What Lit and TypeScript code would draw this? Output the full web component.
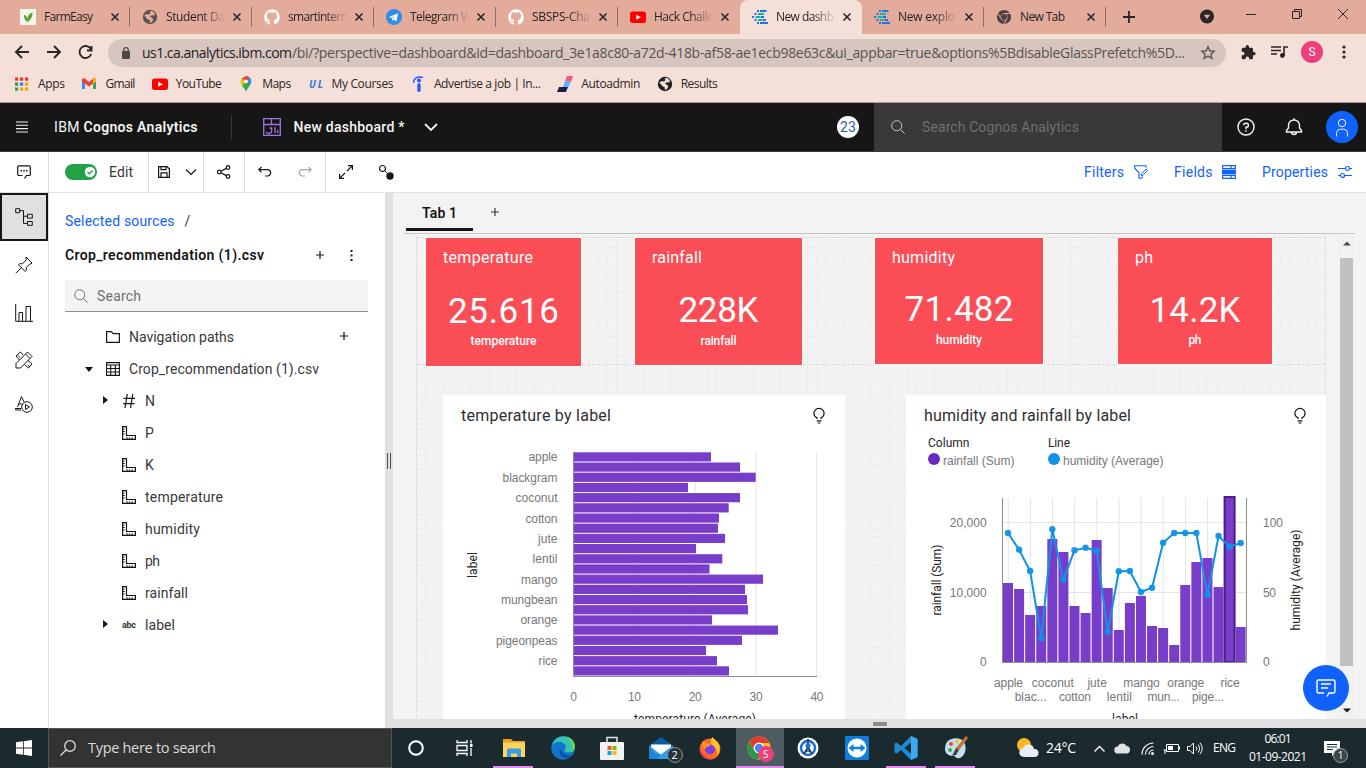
import { LitElement, html, css, svg, nothing } from "lit";
import { customElement, property } from "lit/decorators.js";

/* Inline label that spreads its letters to a given advance width. */
@customElement("fit-text")
class FitText extends LitElement {
  static styles = css`
    :host { display: inline-block; white-space: pre; flex: none; width: max-content; }
  `;
  @property({ type: Number }) w = 0;
  firstUpdated() {
    const len = (this.textContent || "").length;
    if (!this.w || len < 2) return;
    const ls = (this.w - this.getBoundingClientRect().width) / (len - 1);
    this.style.letterSpacing = `${ls}px`;
    this.style.marginRight = `${-ls}px`;
  }
  render() { return html`<slot></slot>`; }
}

const fit = (text: string, w: number, cls = "") => html`<fit-text class=${cls} w=${w}>${text}</fit-text>`;

const icon = (w: number, h: number, body: unknown, cls = "") =>
  html`<svg class="i ${cls}" width=${w} height=${h} viewBox="0 0 ${w} ${h}">${body}</svg>`;

const iconCss = css`
  .i { display: block; flex: none; fill: none; stroke: currentColor; stroke-width: 1; overflow: visible; }
  .f { fill: currentColor; stroke: none; }
  .n { stroke: none; }
`;

const globe = (c: string, bg: string) => icon(16, 16, svg`
  <circle cx="8" cy="8" r="7.2" fill=${c} stroke="none"/>
  <path fill=${bg} stroke="none" d="M2.2 6.5L5 5l2 .6L8.5 4 7.6 2.4 10 1.8l2.8 2.4-.3 2.3-2.8-.3L8 7.6l2 1.2 1.4 1.6-1.6 2.9-2 .8.1-2.6-2.7-1.4L3.8 8z"/>`);
const github = icon(16, 16, svg`<path class="n" fill="#fff" d="M8 .2a8 8 0 00-2.6 15.5c.4.1.6-.2.6-.5v-1.900c-2.300.5-2.800-.9-2.800-.9-.4-.9-.9-1.200-.9-1.200-.7-.5.1-.5.1-.5.800.1 1.300.9 1.300.9.700 1.200 1.900.9 2.300.7.1-.5.300-.9.5-1.100-1.800-.2-3.600-.9-3.600-4 0-.9.300-1.600.800-2.100-.1-.2-.4-1 .1-2.100 0 0 .7-.2 2.200.8a7.700 7.700 0 014 0c1.500-1 2.200-.8 2.200-.8.4 1.100.2 1.900.1 2.100.5.600.800 1.300.800 2.100 0 3.100-1.900 3.800-3.700 4 .300.300.6.8.6 1.600v2.300c0 .3.100.600.6.5A8 8 0 008 .2z"/>`);
const youtube = icon(16, 16, svg`<rect class="n" x="0" y="2.500" width="16" height="11.500" rx="2.500" fill="#f00"/><path class="n" fill="#fff" d="M6.300 5.700l4.500 2.500-4.500 2.500z"/>`);
const cognos = icon(16, 16, svg`<g class="n" fill="#2d6fe0">
  <rect x="8" y="1" width="6.500" height="2"/><rect x="5" y="1" width="2" height="2"/><rect x="2.500" y="4" width="2" height="2"/>
  <rect x="0" y="7" width="2" height="2"/><rect x="2.500" y="10" width="2" height="2"/><rect x="5" y="13" width="2" height="2"/><rect x="8" y="13" width="8" height="2"/><rect x="9" y="7" width="3" height="2"/></g>
  <g class="n" fill="#12b5a6"><rect x="6" y="4" width="6" height="2"/><rect x="3.500" y="7" width="5" height="2"/><rect x="6" y="10" width="4.500" height="2"/></g>
  <rect class="n" x="11" y="10" width="3" height="2" fill="#2d6fe0"/>`);
const telegram = icon(16, 16, svg`<circle class="n" cx="8" cy="8" r="8" fill="#2f8fe8"/><path class="n" fill="#fff" d="M3 8l9-3.800-1.600 8.200-2.700-2-1.400 1.400-.4-2.400L10.500 6 5.200 9z"/>`);
const chromeGrey = icon(16, 16, svg`<circle cx="8" cy="8" r="5.300" stroke="#4a4040" stroke-width="3.600"/><circle class="n" cx="8" cy="8" r="3" fill="#4a4040"/><path stroke="#e3ab9a" d="M8 4.500h7M5 9.500L1.500 4M11 9.800L7.500 15.500"/>`);
const leaf = icon(16, 16, svg`<rect class="n" width="16" height="16" fill="#f4f6ee"/><path class="n" fill="#5ba52c" d="M4 6c2 0 3 2 3.300 4C7.500 7 9 4.500 12.500 3.500c0 5-2 7-4.500 9.500C5 12 3.800 9 4 6z"/>`);

@customElement("browser-bar")
class BrowserBar extends LitElement {
  static styles = [iconCss, css`
    :host { display: block; height: 103px; font: 12px/16px "Open Sans", "Noto Sans", sans-serif; color: #2a2526; }
    .strip { height: 34px; background: #e3ab9a; display: flex; padding-left: 8px; }
    .tab { width: 122px; box-sizing: border-box; padding: 0 9px 0 12px; display: flex; align-items: center; flex: none; }
    .sep { width: 1px; height: 20px; background: #8f6f68; margin: 0 -9px 0 auto; flex: none; }
    .name { margin-left: 8px; width: 60px; overflow: hidden; flex: none; }
    .fade { -webkit-mask-image: linear-gradient(90deg, #000 60%, transparent 100%); mask-image: linear-gradient(90deg, #000 60%, transparent 100%); }
    .close { margin-left: 7px; }
    .on { background: #f5e0d9; border-radius: 8px 8px 0 0; }
    .x { stroke-width: 1.6; }
    .new { margin: 11px 0 0 17px; stroke-width: 1.8; }
    .caption { margin-left: auto; display: flex; }
    .drop { margin: 9px 14px 0 0; }
    .cap { margin: 8px 18px 0; }
    .cap.last { margin-right: 18px; }
    .nav { height: 36px; background: #f5e0d9; display: flex; align-items: center; }
    .back { margin-left: 13px; } .fwd { margin-left: 14px; } .rel { margin-left: 15px; }
    .thick { stroke-width: 1.9; }
    .url { margin: 2px 0 0 15px; width: 1118px; height: 28px; box-sizing: border-box; border-radius: 14px; background: #d7c6bf; display: flex; align-items: center; padding: 0 10px 0 13px; font-size: 14px; line-height: 20px; color: #5a5251; }
    .host { color: #26211f; margin-left: 11px; }
    .star { margin-left: auto; color: #5f5656; stroke-width: 1.4; }
    .ext { margin-left: 15px; } .list { margin-left: 15px; }
    .me { margin-left: 13px; width: 22px; height: 22px; border-radius: 50%; background: #ee3f7b; color: #fff; text-align: center; font: 12px/22px Roboto, sans-serif; }
    .kebab { margin-left: 19px; }
    .marks { background: #f5e0d9; border-bottom: 1px solid #a99b98; display: flex; gap: 16.4px; align-items: center; padding: 0 0 4px 14px; box-sizing: border-box; height: 33px; }
    .mark { display: flex; gap: 8px; align-items: center; }
    .ul { font: italic bold 10px/16px "Open Sans", sans-serif; }
  `];

  private tab(ic: unknown, name: string, w: number, faded: boolean, on: boolean, sep: boolean) {
    return html`<div class="tab ${on ? "on" : ""}">${ic}
      <div class="name ${faded ? "fade" : ""}">${fit(name, w)}</div>
      <div class="close">${icon(8, 8, svg`<path d="M.5.5l7 7M7.500.5l-7 7"/>`, "x")}</div>
      ${sep ? html`<span class="sep"></span>` : nothing}</div>`;
  }

  render() {
    const dots = ["#e33", "#e33", "#e33", "#2c9f4b", "#2b7de9", "#f2a600", "#2c9f4b", "#f2a600", "#f2a600"];
    const marks: [unknown, string, number][] = [
      [icon(16, 16, svg`${dots.map((c, k) => svg`<rect class="n" fill=${c} x=${1 + (k % 3) * 5} y=${1.5 + Math.floor(k / 3) * 5} width="3.200" height="3.200"/>`)}`), "Apps", 27],
      [icon(16, 16, svg`<path class="n" fill="#4285f4" d="M1 13V4.500L4 7v6z"/><path class="n" fill="#34a853" d="M12 13V7l3-2.500V13z"/><path class="n" fill="#ea4335" d="M1 5.500V3.500C1 2 2.800 1.800 3.800 2.600L8 6l4.200-3.400C13.200 1.800 15 2 15 3.500v2L8 10.500z"/><path class="n" fill="#fbbc04" d="M12 3v4.700l3-2.200v-2C15 2 13 2 12 3z"/>`), "Gmail", 30],
      [youtube, "YouTube", 46],
      [icon(16, 16, svg`<path class="n" fill="#34a853" d="M8 16C7.500 13 3 10 3 5.500h10C13 10 8.500 13 8 16z"/><path class="n" fill="#4285f4" d="M8 0a5.300 5.300 0 015.300 5.300c0 1.200-.3 2-.8 3L8 5z"/><path class="n" fill="#ea4335" d="M8 0L3.500 2.500 8 5.500l3.500-4A5 5 0 008 0z"/><path class="n" fill="#fbbc04" d="M8 5.500L4.500 9.800C3.500 8.500 2.700 7 2.700 5.300c0-1.100.3-2 .8-2.800z"/><circle class="n" cx="8" cy="5.300" r="1.900" fill="#fff"/>`), "Maps", 29],
      [icon(16, 16, svg`<text class="n ul" x="1" y="11.500" fill="#2a7ad4" textLength="14">UL</text>`), "My Courses", 62],
      [icon(16, 16, svg`<circle class="n" cx="9" cy="4.500" r="2" fill="#2557f5"/><rect class="n" x="7.400" y="7.300" width="3.200" height="8.700" rx="1.400" fill="#2557f5"/><path stroke="#2557f5" stroke-width="1.300" d="M3.500 7c0-5 4-7 9.500-5.500"/>`), "Advertise a job | In...", 107],
      [icon(16, 16, svg`<path class="n" fill="#f2557f" d="M10 0h6l-2 5.500H8z"/><path class="n" fill="#54b5f7" d="M8 5.500h6L11.500 11H6z"/><path class="n" fill="#1b1f4b" d="M2 11h9l-2 5H0z"/>`), "Autoadmin", 59],
      [globe("#242122", "#f5e0d9"), "Results", 37],
    ];
    return html`
      <div class="strip">
        ${this.tab(leaf, "FarmEasy", 49, false, false, true)}
        ${this.tab(globe("#5c5050", "#e3ab9a"), "Student Da", 59, true, false, true)}
        ${this.tab(github, "smartintern", 60, true, false, true)}
        ${this.tab(telegram, "Telegram W", 62, true, false, true)}
        ${this.tab(github, "SBSPS-Cha", 58, true, false, true)}
        ${this.tab(youtube, "Hack Challe", 60, true, false, false)}
        ${this.tab(cognos, "New dashb", 58, true, true, false)}
        ${this.tab(cognos, "New explo", 57, true, false, true)}
        ${this.tab(chromeGrey, "New Tab", 45, false, false, true)}
        ${icon(12, 12, svg`<path d="M6 0v12M0 6h12"/>`, "new")}
        <div class="caption">
          ${icon(14, 14, svg`<circle class="f" cx="7" cy="7.500" r="7"/><path class="n" fill="#e3ab9a" d="M3.800 5.800h6.400L7 10z"/>`, "drop")}
          ${icon(10, 11, svg`<path d="M0 6.500h10"/>`, "cap")}
          ${icon(10, 11, svg`<path d="M.5 3.500h7v7h-7zM2.500 3V1.500h7v7H8"/>`, "cap")}
          ${icon(10, 11, svg`<path d="M0 1l10 10M10 1L0 11"/>`, "cap last")}
        </div>
      </div>
      <div class="nav">
        ${icon(18, 16, svg`<path d="M16 8H3M9 2L3 8l6 6"/>`, "thick back")}
        ${icon(18, 16, svg`<path d="M2 8h13M9 2l6 6-6 6"/>`, "thick fwd")}
        ${icon(15, 16, svg`<path d="M13 5.500A6 6 0 1013.200 10M13.500 2v4.500H9"/>`, "thick rel")}
        <div class="url">
          ${icon(10, 14, svg`<rect class="n" x="1" y="5" width="8" height="8" rx="1" fill="#4d4746"/><path stroke="#4d4746" stroke-width="1.400" d="M2.800 6V3.800a2.200 2.200 0 014.400 0V6"/>`)}
          ${fit("us1.ca.analytics.ibm.com", 150, "host")}${fit("/bi/?perspective=dashboard&id=dashboard_3e1a8c80-a72d-418b-af58-ae1ecb98e63c&ui_appbar=true&options%5BdisableGlassPrefetch%5D...", 893)}
          ${icon(16, 16, svg`<path d="M8 1.800l1.800 4 4.400.4-3.300 2.900 1 4.300L8 11.100l-3.900 2.300 1-4.300L1.800 6.200l4.400-.4z"/>`, "star")}
        </div>
        ${icon(15, 15, svg`<path class="f" d="M13 7h-1V4a1.300 1.300 0 00-1.300-1.300H8V1.700a1.700 1.700 0 00-3.400 0v1H2A1.300 1.300 0 00.7 4v2.700h1a1.800 1.800 0 010 3.600h-1V13A1.300 1.300 0 002 14.300h2.600v-1a1.800 1.800 0 013.600 0v1h2.500A1.300 1.300 0 0012 13v-2.700h1A1.650 1.650 0 0013 7z"/>`, "ext")}
        ${icon(17, 14, svg`<path stroke-width="1.600" d="M0 2h10M0 5.500h10M0 9h6M13 10.500V2h4"/><circle class="f" cx="11.400" cy="10.500" r="2.400"/>`, "list")}
        <div class="me">S</div>
        ${icon(4, 14, svg`<g class="f"><circle cx="2" cy="2" r="1.600"/><circle cx="2" cy="7" r="1.600"/><circle cx="2" cy="12" r="1.600"/></g>`, "kebab")}
      </div>
      <div class="marks">${marks.map(([ic, t, w]) => html`<div class="mark">${ic}${fit(t, w)}</div>`)}</div>`;
  }
}

const magnifier = (s: number, cls = "") => icon(s, s, svg`<circle cx=${s * 0.41} cy=${s * 0.41} r=${s * 0.36}/><path d="M${s * 0.67} ${s * 0.67}L${s - 0.3} ${s - 0.3}"/>`, cls);
const plus8 = (cls = "") => icon(8, 8, svg`<path stroke-width="1.200" d="M4 0v8M0 4h8"/>`, cls);

@customElement("cognos-header")
class CognosHeader extends LitElement {
  static styles = [iconCss, css`
    :host { display: block; font: 14px/20px Roboto, "Noto Sans", sans-serif; }
    .top { height: 48px; background: #161616; border-bottom: 1px solid #393939; color: #f4f4f4; display: flex; align-items: center; }
    .menu { margin-left: 16px; }
    .ibm { margin-left: 26px; } .cog { margin-left: 4px; font-weight: 600; }
    .rule { width: 1px; height: 24px; background: #393939; margin-left: 33px; }
    .dash { margin-left: 31px; color: #a374e0; }
    .doc { margin-left: 13px; font-weight: 500; }
    .chev { margin-left: 19px; stroke-width: 1.800; }
    .count { margin-left: auto; width: 22px; height: 22px; border-radius: 50%; background: #fff; color: #2a5db0; display: flex; justify-content: center; align-items: center; }
    .search { margin-left: 15px; width: 348px; height: 48px; background: #393939; display: flex; align-items: center; color: #6f6f6f; box-sizing: border-box; padding-left: 17px; gap: 17px; }
    .light { color: #c6c6c6; }
    .help { margin-left: 15px; stroke-width: 1.400; } .bell { margin-left: 30px; stroke-width: 1.400; }
    .user { margin: 0 8px 0 23px; width: 32px; height: 32px; border-radius: 50%; background: #0f62fe; display: flex; align-items: center; justify-content: center; stroke-width: 1.500; }
    .bar { height: 40px; background: #fff; border-bottom: 1px solid #e0e0e0; color: #161616; display: flex; }
    .cell { display: flex; align-items: center; border-right: 1px solid #dcdcdc; box-sizing: border-box; }
    .c1 { width: 49px; padding-left: 17px; } .c2 { width: 100px; padding-left: 16px; gap: 12px; color: #393939; }
    .c3 { width: 55px; padding-left: 9px; gap: 16px; } .c4 { width: 41px; padding-left: 13px; }
    .c5 { width: 81px; padding-left: 13px; gap: 26px; } .c6 { padding-left: 13px; gap: 26px; border: 0; }
    .dim { color: #a8a8a8; }
    .right { margin-left: auto; display: flex; align-items: center; color: #0f62fe; padding-right: 14px; }
    .pad { margin-left: 26px; } .g { margin-left: 10px; }
    .g1 { margin-left: 9.5px; }
  `];
  render() {
    return html`
      <div class="top">
        ${icon(12, 12, svg`<path stroke-width="1.100" d="M0 1h12M0 4.300h12M0 7.600h12M0 11h12"/>`, "menu")}
        ${fit("IBM", 25.5, "ibm")}${fit("Cognos Analytics", 114, "cog")}
        <div class="rule"></div>
        ${icon(18, 18, svg`<path stroke-width="1.300" d="M.7.700h16.600v16.600H.7zM.7 6.500h16.600M8.500.7v5.800M6.500 10h2.200v2.500a3 3 0 01-5.500 1.700M12 9v6M14.800 12v3"/>`, "dash")}
        ${fit("New dashboard *", 111, "doc")}
        ${icon(14, 8, svg`<path d="M1 1l6 6 6-6"/>`, "chev")}
        <div class="count">${fit("23", 16)}</div>
        <div class="search">${magnifier(14, "light")}${fit("Search Cognos Analytics", 157)}</div>
        ${icon(18, 18, svg`<circle cx="9" cy="9" r="8"/><path d="M6.700 7.300a2 2 0 012-2h.7a2 2 0 010 4H9v2M9 12.300v1.500"/>`, "help")}
        ${icon(18, 18, svg`<path d="M1.500 14v-1.500L3.500 10V7.500a5.500 5.500 0 0111 0V10l2 2.500V14zM6.500 14a2.500 2.500 0 005 0M9 .3V2"/>`, "bell")}
        <div class="user">${icon(14, 19, svg`<circle cx="7" cy="5" r="3.700"/><path d="M1.500 18.500v-3.300a4 4 0 014-4h3a4 4 0 014 4v3.300"/>`)}</div>
      </div>
      <div class="bar">
        <div class="cell c1">${icon(14, 14, svg`<path stroke-width="1.200" d="M5.500 10.500H2A1.300 1.300 0 01.7 9.200V2.200A1.300 1.300 0 012 .9h10a1.300 1.300 0 011.300 1.300v7a1.300 1.300 0 01-1.300 1.300H9.500L7.500 13.500"/><path class="f" d="M3.500 5h1.500v1.500H3.500zM6.250 5h1.500v1.500h-1.500zM9 5h1.500v1.500H9z"/>`)}</div>
        <div class="cell c2">${icon(32, 16, svg`<rect class="n" width="32" height="16" rx="8" fill="#24a148"/><circle class="n" cx="25" cy="8" r="5.200" fill="#fff"/><path stroke="#24a148" stroke-width="1.400" d="M22.500 8l1.800 1.800 3.300-3.300"/>`)}${fit("Edit", 24)}</div>
        <div class="cell c3">
          ${icon(12, 12, svg`<path stroke-width="1.200" d="M.6.600h8.400l2.400 2.400v8.400H.6zM3 .6v3h5v-3M3 11.400V6.800h6v4.600"/>`)}
          ${icon(10, 6, svg`<path stroke-width="1.200" d="M0 .5l5 5 5-5"/>`)}</div>
        <div class="cell c4">${icon(14, 14, svg`<g stroke-width="1.200"><circle cx="2.300" cy="7" r="1.800"/><circle cx="11" cy="2.500" r="1.800"/><circle cx="11" cy="11.500" r="1.800"/><path d="M4 6.200l5.300-2.800M4 7.800l5.300 2.800"/></g>`)}</div>
        <div class="cell c5">
          ${icon(14, 10, svg`<path stroke-width="1.200" d="M3.500 0L.8 2.700l2.700 2.700M1 2.700h9a3.200 3.200 0 010 6.300H7"/>`)}
          ${icon(14, 10, svg`<path stroke-width="1.200" d="M10.500 0l2.700 2.700-2.700 2.700M13 2.700H4a3.200 3.200 0 000 6.300h3"/>`, "dim")}</div>
        <div class="cell c6">
          ${icon(14, 14, svg`<path stroke-width="1.200" d="M9 .6h4.400V5M13.400.6L8 6M.6 9v4.400H5M.6 13.400L6 8"/>`)}
          ${icon(15, 14, svg`<circle cx="3.500" cy="3.500" r="3" stroke-width="1.200"/><path d="M5.700 5.700L8 8"/><circle class="f" cx="11" cy="11" r="3.700"/>`)}</div>
        <div class="right">
          ${fit("Filters", 40)}
          ${icon(14, 14, svg`<path stroke-width="1.100" d="M12 2.800V.8H.7v2.400L5 7.800v5.400h2.500l1.500-1.500"/><path stroke-width="1" d="M7.300 10.700l.4-2 4.300-4.600 1.500 1.400-4.300 4.600z"/>`, "g")}
          ${fit("Fields", 38.5, "pad")}
          ${icon(14, 14, svg`<path stroke-width="1.200" d="M.6.600h12.800v3H.6zM.6 10.400h12.800v3H.6zM9 .6v3M9 10.400v3"/><rect class="f" y="4.800" width="14" height="4.400"/>`, "g1")}
          ${fit("Properties", 66, "pad")}
          ${icon(14, 14, svg`<path stroke-width="1.200" d="M0 3.500h7.500M11.500 3.500H14M0 10.500h2.500M6.500 10.500H14"/><circle cx="9.500" cy="3.500" r="2" stroke-width="1.200"/><circle cx="4.500" cy="10.500" r="2" stroke-width="1.200"/>`, "g")}
        </div>
      </div>`;
  }
}

@customElement("source-panel")
class SourcePanel extends LitElement {
  static styles = [iconCss, css`
    :host { display: flex; flex: none; width: 393px; background: #fff; color: #393939; font: 14px/20px Roboto, "Noto Sans", sans-serif; }
    .rail { width: 48px; border-right: 1px solid #e0e0e0; flex: none; }
    .slot { height: 48px; display: flex; align-items: center; justify-content: center; box-sizing: border-box; color: #161616; stroke-width: 1.300; }
    .slot.s3 { height: 45px; } .slot.s4 { height: 44px; }
    .active { background: #e0e0e0; border: 2px solid #161616; }
    .body { width: 336px; padding: 18px 17px 0 16px; box-sizing: border-box; }
    .crumb { display: flex; color: #0f62fe; gap: 10px; } .slash { color: #393939; }
    .head { display: flex; align-items: center; margin-top: 14px; font-weight: 600; color: #161616; }
    .p1 { margin-left: 52px; } .k { margin-left: 26px; }
    .find { margin: 15px 0 9px; height: 31px; background: #f4f4f4; border-bottom: 1px solid #8d8d8d; display: flex; align-items: center; padding-left: 9px; gap: 9px; color: #6f6f6f; }
    .row { height: 32px; display: flex; align-items: center; padding-left: 20px; }
    .row.child { padding-left: 36px; }
    .caret { width: 21px; flex: none; color: #161616; }
    .child .caret { padding-left: 2px; width: 19px; margin-top: -2px; }
    .row svg { color: #161616; }
    .name { margin-left: 9px; }
    .p2 { margin: -2px 0 0 106px; }
    .split { width: 8px; background: #e0e0e0; display: flex; align-items: flex-start; padding: 260px 0 0; box-sizing: border-box; }
    .abc { font: bold 9px/10px Roboto, sans-serif; width: 14px; }
  `];
  render() {
    const right = icon(5, 8, svg`<path class="f" d="M0 0l5 4-5 4z"/>`);
    const down = icon(8, 5, svg`<path class="f" d="M0 0h8L4 5z"/>`);
    const ruler = icon(14, 14, svg`<path stroke-width="1.200" d="M.6.600h3.900v8.900h8.900v3.900H.6zM.6 3h2M.6 5.500h2M.6 8h2M5 13.400v-2M7.500 13.400v-2M10 13.400v-2"/>`);
    const hash = icon(14, 14, svg`<path stroke-width="1.200" d="M5.300 0L3 14M10.800 0L8.500 14M1.500 4.300H13M1 9.700h11.500"/>`);
    const children: [unknown, unknown, string, number][] = [
      [right, hash, "N", 0], ["", ruler, "P", 0], ["", ruler, "K", 0], ["", ruler, "temperature", 78],
      ["", ruler, "humidity", 55], ["", ruler, "ph", 15], ["", ruler, "rainfall", 43],
      [right, html`<span class="abc">${fit("abc", 14)}</span>`, "label", 30],
    ];
    return html`
      <div class="rail">
        <div class="slot active">${icon(18, 18, svg`<path d="M.7.700h4v4h-4zM12.500 6.300h4.800v3.800h-4.800zM12.500 13.500h4.800v3.800h-4.800zM4.700 2.700h3.800v12.700h4M8.500 8.200h4"/>`)}</div>
        <div class="slot">${icon(18, 18, svg`<path d="M11 1l6 6-1 1-1-.2-3.800 3.800.1 2.800-1.100 1.100-6.700-6.700 1.100-1.100 2.800.1L11.200 4 11 2zM6.500 11.500L.7 17.300"/>`)}</div>
        <div class="slot">${icon(18, 18, svg`<path d="M.7 0v17.300H18M4 17.300V8.500h3.500v8.800M11 17.300V2.500h4.500v14.800"/>`)}</div>
        <div class="slot s3">${icon(18, 18, svg`<path d="M12.500 1L17 5.500 5.500 17H1v-4.500zM10.500 3l4.500 4.500M5.500 1L1 5l3.500 4M8 4L5.500 1M13 9.500l4 3.500-3.500 4-4-3.500M3 4.500l2 2M13 14.500l1.500 1"/>`)}</div>
        <div class="slot s4">${icon(18, 18, svg`<path d="M2.500 12L6.500 1.500 9 7M3.800 9H7M0 13.500h6M0 15h6"/><circle cx="12" cy="12" r="5.300"/><path d="M10.500 9.500v5l4-2.500z"/>`)}</div>
      </div>
      <div class="body">
        <div class="crumb">${fit("Selected sources", 109.5)}<span class="slash">/</span></div>
        <div class="head">${fit("Crop_recommendation (1).csv", 199)}${plus8("p1")}${icon(3, 12, svg`<path class="f" d="M.5 1h2v2h-2zM.5 5.500h2v2h-2zM.5 10h2v2h-2z"/>`, "k")}</div>
        <div class="find">${magnifier(14)}${fit("Search", 44)}</div>
        <div class="row"><span class="caret"></span>${icon(14, 12, svg`<path stroke-width="1.200" d="M.6.600h4.700l2 2h6.100v8.800H.6z"/>`)}${fit("Navigation paths", 105, "name")}${plus8("p2")}</div>
        <div class="row"><span class="caret">${down}</span>${icon(14, 14, svg`<path stroke-width="1.100" d="M.6.600h12.800v12.800H.6zM.6 3h12.800M.6 6.500h12.800M.6 10h12.800M4.700 3v10.400M9.300 3v10.400"/>`)}${fit("Crop_recommendation (1).csv", 190, "name")}</div>
        ${children.map(([c, ic, t, w]) => html`<div class="row child"><span class="caret">${c}</span>${ic}${fit(t, w, "name")}</div>`)}
      </div>
      <div class="split">${icon(8, 16, svg`<path stroke="#525252" d="M2.500 0v16M5.500 0v16"/>`)}</div>`;
  }
}

const arial = "lib";
const label = (t: string, x: number, y: number, w: number, anchor = "middle", cls = arial) =>
  svg`<text class=${cls} x=${x} y=${y} text-anchor=${anchor} textLength=${w}>${t}</text>`;
const vertical = (t: string, x: number, y: number, w: number) =>
  svg`<text class="ttl" transform="translate(${x} ${y}) rotate(-90)" text-anchor="middle" textLength=${w}>${t}</text>`;

const crops: [string, number, string][] = [
  ["apple", 29, "apple"], ["blackgram", 55, "blac..."], ["coconut", 42, "coconut"], ["cotton", 32, "cotton"],
  ["jute", 19.5, "jute"], ["lentil", 25, "lentil"], ["mango", 36.5, "mango"], ["mungbean", 56.5, "mun..."],
  ["orange", 37, "orange"], ["pigeonpeas", 61.5, "pige..."], ["rice", 19, "rice"],
];
const tempEnds = [711, 740, 755.7, 688, 740, 728.7, 719, 718, 725, 696, 722.3, 709.5, 763, 745, 747, 748, 712, 778, 742, 706, 717, 729];
const rainTops = [583, 589, 615, 606, 539, 552, 606, 613, 540, 588, 630, 603, 596, 626, 628, 645, 585, 562, 558, 587, 497, 627];
const humid = [533, 549.7, 571, 638.3, 529.3, 579.7, 550.3, 547.7, 550.7, 631.7, 571.3, 571, 592, 587.7, 542.7, 533, 533, 533, 594.7, 536, 546.7, 543];

@customElement("dash-canvas")
class DashCanvas extends LitElement {
  static styles = [iconCss, css`
    :host { display: flex; flex-direction: column; flex: 1; min-width: 0; background: #f3f3f3; color: #161616; font: 14px/20px Roboto, "Noto Sans", sans-serif; }
    .tabs { height: 40px; margin: 0 11px; border-bottom: 1px solid #c6c6c6; display: flex; padding-left: 2px; box-sizing: content-box; }
    .tab { width: 67px; height: 35px; border-bottom: 3px solid #161616; display: flex; align-items: center; justify-content: center; font-weight: 600; line-height: 40px; box-sizing: content-box; }
    .tab fit-text { margin-top: 5px; }
    .add { margin: 15px 0 0 18px; color: #393939; }
    .view { height: 485px; padding: 3px 0 0 23px; box-sizing: border-box; display: flex; overflow: hidden; }
    .board { height: 490px; border: 1px dashed #dcdcdc; box-sizing: border-box; width: 910px; flex: none;
      background-image: linear-gradient(90deg, #ececec 1px, transparent 1px), linear-gradient(#ececec 1px, transparent 1px); background-size: 9.1px 9.1px; background-position: -1px -1px; }
    .kpis { display: flex; align-items: flex-start; height: 127px; border-bottom: 1px dashed #dcdcdc; box-sizing: border-box; }
    .kpi { background: #fb4d56; color: #fff; border: 1px solid #fff; box-sizing: border-box; margin-top: -1px; display: flex; flex-direction: column; align-items: center; flex: none; }
    .k0 { width: 157px; height: 130px; margin-left: 8px; } .k1 { width: 169px; height: 129px; margin-left: 52px; }
    .k2 { width: 170px; height: 128px; margin-left: 71px; } .k3 { width: 156px; height: 128px; margin-left: 73px; }
    .kt { align-self: flex-start; margin: 9px 0 0 17px; font-size: 16px; line-height: 22px; }
    .kv { font-size: 35px; line-height: 40px; margin-top: 23px; }
    .k1 .kv { margin-top: 22px; } .k2 .kv { margin-top: 21px; } .k3 .kv { margin-top: 22px; }
    .kc { font-size: 12px; line-height: 16px; margin-top: 1px; font-weight: 500; }
    .k1 .kc { margin-top: 2px; } .k2 .kc { margin-top: 2px; }
    .charts { display: flex; padding-top: 30px; height: 325px; }
    .card { background: #fff; height: 325px; display: flex; flex-direction: column; flex: none; }
    .a { width: 402px; margin-left: 26px; } .b { width: 420px; margin-left: 61px; }
    .ch { height: 42px; display: flex; align-items: center; justify-content: space-between; padding: 0 20px 0 18px; font-size: 16px; flex: none; }
    .ch fit-text { color: #303030; }
    .plot { display: block; flex: none; }
    .lib { font: 12px "Liberation Sans", Arial, sans-serif; fill: #777; }
    .ttl { font: 12px Roboto, sans-serif; fill: #262626; }
    .grid { stroke: #e4e4e4; stroke-width: 1; } .axis { stroke: #8d8d8d; fill: none; }
    .bar { fill: #6929c4; fill-opacity: .9; }
    .hi { fill: #6929c4; fill-opacity: .9; stroke: #491d8b; stroke-width: 2; }
    .line { fill: none; stroke: #1192e8; stroke-width: 2; } .dot { fill: #1192e8; fill-opacity: .95; }
    .scroll { margin: -1px 0 0 12px; width: 17px; background: #f1f1f1; display: flex; flex-direction: column; align-items: center; flex: none; }
    .up { margin-top: 5px; color: #505050; } .thumb { width: 13px; height: 408px; background: #c1c1c1; margin: 12px 0 42px; flex: none; }
    .foot { height: 9px; background: #e0e0e0; display: flex; align-items: center; justify-content: center; }
    .grip { width: 14px; height: 4px; background: #8d8d8d; }
  `];

  private kpi(n: number, t: string, tw: number, v: string, vw: number, cw: number) {
    return html`<div class="kpi k${n}">${fit(t, tw, "kt")}${fit(v, vw, "kv")}${fit(t, cw, "kc")}</div>`;
  }
  private bulb() {
    return icon(12, 16, svg`<path stroke-width="1.200" d="M4 11V9.800C2 8.800.9 7.300.9 5.500a5.100 5.100 0 0110.200 0c0 1.800-1.100 3.300-3.100 4.300V11M3.700 12.800h4.600M4.500 15h3"/>`);
  }

  render() {
    const cx = (i: number) => 1008 + i * 11.08;
    return html`
      <div class="tabs"><div class="tab">${fit("Tab 1", 35)}</div>${plus8("add")}</div>
      <div class="view">
        <div class="board">
          <div class="kpis">
            ${this.kpi(0, "temperature", 90, "25.616", 111, 66)}
            ${this.kpi(1, "rainfall", 50, "228K", 80, 36)}
            ${this.kpi(2, "humidity", 63, "71.482", 109, 46)}
            ${this.kpi(3, "ph", 18, "14.2K", 91, 13)}
          </div>
          <div class="charts">
            <div class="card a">
              <div class="ch">${fit("temperature by label", 150)}${this.bulb()}</div>
              <svg class="plot" width="402" height="283" viewBox="443 437 402 283">
                ${[1, 2, 3, 4].map((i) => svg`<path class="grid" d="M${573.5 + i * 60.8} 452v224"/>`)}
                ${tempEnds.map((e, i) => svg`<rect class="bar" x="574" y=${452.3 + i * 10.19} width=${e - 574} height="9.200"/>`)}
                <path class="axis" d="M573.500 452v224.500h243.500"/>
                ${crops.map(([t, w], i) => label(t, 557.5, 461.4 + i * 20.38, w, "end"))}
                ${[0, 10, 20, 30, 40].map((v, i) => label(String(v), 573.7 + i * 60.8, 701, v ? 13 : 6.5))}
                ${label("temperature (Average)", 695, 722.8, 122, "middle", "ttl")}
                ${vertical("label", 477, 565, 26)}
              </svg>
            </div>
            <div class="card b">
              <div class="ch">${fit("humidity and rainfall by label", 207)}${this.bulb()}</div>
              <svg class="plot" width="420" height="283" viewBox="906 437 420 283">
                ${label("Column", 928, 447, 41.5, "start", "ttl")}${label("Line", 1048, 447, 22, "start", "ttl")}
                <circle cx="934" cy="459" r="6" fill="#6929c4"/><circle cx="1054" cy="459" r="6" fill="#1192e8"/>
                ${label("rainfall (Sum)", 943, 465, 71.5, "start")}${label("humidity (Average)", 1063, 465, 100.5, "start")}
                <path class="grid" d="M1003 522.500h244M1003 592.500h244"/>
                ${crops.map((_, i) => svg`<path class="grid" d="M${1008.2 + i * 22.16} 498v164"/>`)}
                ${rainTops.map((y, i) => i === 20
                  ? svg`<rect class="hi" x=${cx(i) - 5} y=${y} width="10" height=${662 - y}/>`
                  : svg`<rect class="bar" x=${cx(i) - 5} y=${y} width="10" height=${662 - y}/>`)}
                <path class="axis" d="M1002.500 498v164.500h244v-164.500"/>
                <polyline class="line" points=${humid.map((y, i) => `${cx(i)},${y}`).join(" ")}/>
                ${humid.map((y, i) => svg`<circle class="dot" cx=${cx(i)} cy=${y} r="3.200"/>`)}
                ${label("20,000", 986.7, 527, 37, "end")}${label("10,000", 986.7, 597, 37, "end")}${label("0", 986.7, 666, 6.5, "end")}
                ${label("100", 1263, 527, 20, "start")}${label("50", 1263, 597, 13, "start")}${label("0", 1263, 666, 6.5, "start")}
                ${crops.map(([, w, s], i) => label(s, cx(i * 2) + 0.5, i % 2 ? 701 : 687, s.endsWith("...") ? 32 : w))}
                ${label("label", 1125, 722.8, 26, "middle", "ttl")}
                ${vertical("rainfall (Sum)", 941, 580, 71)}${vertical("humidity (Average)", 1300, 580, 101)}
              </svg>
            </div>
          </div>
        </div>
        <div class="scroll">
          ${icon(8, 5, svg`<path class="f" d="M0 4.500h8L4 .5z"/>`, "up")}
          <div class="thumb"></div>
          ${icon(8, 5, svg`<path class="f" d="M0 .5h8l-4 4z"/>`)}
        </div>
      </div>
      <div class="foot"><div class="grip"></div></div>`;
  }
}

const chromeLogo = svg`<circle class="n" cx="12" cy="12" r="11.500" fill="#fbc116"/><path class="n" fill="#e33b2e" d="M2 6.200A11.500 11.500 0 0122 6.200L22.300 7H12l-5.500 6z"/><path class="n" fill="#229a4a" d="M2 6.200A11.500 11.500 0 0011 23.400L15.500 15 7 14z"/><circle class="n" cx="12" cy="12" r="5.400" fill="#fff"/><circle class="n" cx="12" cy="12" r="4.200" fill="#4285f4"/>`;

@customElement("task-bar")
class TaskBar extends LitElement {
  static styles = [iconCss, css`
    :host { display: flex; height: 40px; background: #1a2a2f; color: #fff; font: 12px/16px "Open Sans", "Noto Sans", sans-serif; }
    .start { width: 48px; display: flex; align-items: center; justify-content: center; }
    .find { width: 344px; box-sizing: border-box; border: 1px solid #565656; background: #333; display: flex; align-items: center; gap: 12px; padding-left: 11px; font-size: 14.5px; line-height: 20px; color: #dcdcdc; }
    .find svg { stroke-width: 1.300; }
    .apps { display: flex; margin-left: -1px; }
    .app { width: 49.1px; height: 40px; box-sizing: border-box; display: flex; align-items: center; justify-content: center; position: relative; flex: none; }
    .run::after { content: ""; position: absolute; left: 4px; right: 5px; bottom: 0; height: 2px; background: #e58cf0; }
    .cur { background: linear-gradient(90deg, transparent 1px, #4d5c60 1px); }
    .cur::after { left: 1px; right: 0; }
    .badge { position: absolute; right: 3px; bottom: 5px; width: 16px; height: 16px; border-radius: 50%; box-sizing: border-box; border: 1px solid #8b9598; background: #26343a; font-size: 11px; line-height: 14px; text-align: center; }
    .badge.pink { background: #ee3f7b; border-color: #ee3f7b; font-size: 10px; right: 10px; bottom: 6px; }
    .tray { margin-left: auto; display: flex; align-items: center; }
    .temp { margin-left: 7px; font-size: 14px; } .up { margin-left: 18px; } .cloud { margin-left: 9px; } .wifi { margin-left: 10px; }
    .bat { margin-left: 10px; } .spk { margin-left: 6px; } .eng { margin-left: 10px; }
    .clock { margin-left: 13px; width: 58px; text-align: center; line-height: 18px; display: flex; flex-direction: column; align-items: center; }
    .note { margin: 0 26px 0 17px; position: relative; }
    .nb { position: absolute; right: -8px; bottom: -7px; width: 15px; height: 15px; border-radius: 50%; background: #3a474b; border: 1px solid #9aa3a5; box-sizing: border-box; text-align: center; font-size: 10px; line-height: 13px; }
  `];
  private app(ic: unknown, cls = "", badge: unknown = nothing) { return html`<div class="app ${cls}">${ic}${badge}</div>`; }
  render() {
    return html`
      <div class="start">${icon(16, 16, svg`<path class="f" d="M0 2.300l7-1v6.300H0zM7.800 1.200L16 0v7.600H7.800zM0 8.400h7v6.300l-7-1zM7.800 8.400H16V16l-8.200-1.200z"/>`)}</div>
      <div class="find">${icon(16, 16, svg`<circle cx="10" cy="6" r="5.300"/><path d="M6.300 9.700L.5 15.500"/>`)}${fit("Type here to search", 128)}</div>
      <div class="apps">
        ${this.app(icon(16, 16, svg`<circle cx="8" cy="8" r="6.800" stroke-width="2"/>`))}
        ${this.app(icon(18, 16, svg`<path stroke-width="1.300" d="M1 0v2.500h10V0M1 16v-2.500h10V16M1 5.500h10v5H1zM15 0v3.500M15 8v8"/><rect class="f" x="14" y="4" width="2.500" height="3"/>`))}
        ${this.app(icon(24, 20, svg`<path class="n" fill="#e8a317" d="M1 1h8l2 2h12v4H1z"/><rect class="n" x="1" y="4.500" width="22" height="14.500" fill="#ffd35c"/><path class="n" fill="#3a9be8" d="M5 19v-7a1.500 1.500 0 011.500-1.500h11A1.500 1.500 0 0119 12v7h-4v-3.500H9V19z"/>`), "run")}
        ${this.app(icon(24, 24, svg`<circle class="n" cx="12" cy="12" r="11.800" fill="#1173c9"/><path class="n" fill="#35c1b5" d="M1 9.500C3 3 7.500.2 12.500.2 19 .2 24 5 24 10.500c0 4-3 6-6.500 6-3 0-4.300-1-4.300-1.800 0-.7 1.500-1.500 1.500-3.700 0-3-3-5-6.500-5C5 6 2.300 7.500 1 9.500z"/><path class="n" fill="#5bd45c" d="M15 .7C20.500 2 24 6 24 10.500c0 3-1.800 5-4.200 5.700C22 11 20 5 15 .7z"/><path class="n" fill="#0c4f9e" d="M9 12c-2 5 2 10.500 8.500 10.200A11.800 11.800 0 0121.500 19C16 20.500 10 18 9 12z"/>`))}
        ${this.app(icon(24, 24, svg`<path stroke="#e8e8e8" stroke-width="1.500" d="M7 6V1.500h10V6"/><rect class="n" y="6" width="24" height="18" rx="1" fill="#f2f2f2"/><path class="n" fill="#f35325" d="M7.500 10h4v4h-4z"/><path class="n" fill="#81bc06" d="M12.500 10h4v4h-4z"/><path class="n" fill="#05a6f0" d="M7.500 15h4v4h-4z"/><path class="n" fill="#ffba08" d="M12.500 15h4v4h-4z"/>`))}
        ${this.app(icon(24, 22, svg`<path class="n" fill="#0c59a4" d="M0 8.500L12 0l12 8.500V21H0z"/><path class="n" fill="#fff" d="M2 7.500h20V12l-10 6L2 12z"/><path class="n" fill="#2a9ee8" d="M0 8.500L11 17 0 22zM24 8.500L12 17.500 3 22h21z"/><path class="n" fill="#1b86d6" d="M0 8.500V22h10z"/>`), "", html`<span class="badge">2</span>`)}
        ${this.app(icon(24, 24, svg`<circle class="n" cx="12" cy="13" r="10.500" fill="#ff6a1f"/><path class="n" fill="#ffc62e" d="M14.500 1c2 3 4 3.500 5.500 6 2.500 4 2 9-1 12.500 1-4-.5-8-4-9.500-3-1.500-3-6-.5-9z"/><path class="n" fill="#f4337a" d="M2 9C2 18 8 22 15 23 7 25 1 19 2 9z"/><circle class="n" cx="12" cy="13.500" r="5" fill="#7a3fe0"/><path class="n" fill="#ff9a28" d="M5 5c2 2 4 2.500 6 2.500 1.500 0 2 1 1 2-2 1.500-4 1-5 3.500C4 11 4 8 5 5z"/>`))}
        ${this.app(icon(24, 24, chromeLogo), "run cur", html`<span class="badge pink">S</span>`)}
        ${this.app(icon(22, 22, svg`<circle class="n" cx="11" cy="11" r="10.500" fill="#fff"/><circle cx="11" cy="11" r="7" stroke="#1c6dd0" stroke-width="2.500"/><path stroke="#1b3a66" stroke-width="1.600" d="M11 2v5M11 10L7 17M11 10l4 7M8 14h6"/><circle class="n" cx="11" cy="8.500" r="2.500" fill="#1c6dd0"/>`))}
        ${this.app(icon(24, 24, svg`<rect class="n" width="24" height="24" rx="1.500" fill="#0e7fe0"/><circle class="n" cx="12" cy="12" r="9.500" fill="#fff"/><path class="n" fill="#0e7fe0" d="M3.500 12l5-4v2.700h7V8l5 4-5 4v-2.700h-7V16z"/>`))}
        ${this.app(icon(24, 24, svg`<path class="n" fill="#1f8ad2" d="M17 0l6.500 3v18L17 24 7 14l-4.500 3.500L.5 16.500v-9l2-1L7 10zM17 6.500L10.500 12l6.500 5.500z"/><path class="n" fill="#3ba9f3" d="M17 0l6.500 3v18L17 24z"/>`), "run")}
        ${this.app(icon(24, 24, svg`<path class="n" fill="#bfe0f2" d="M3 6C7 1 17 1 20 6c3 5 2 13-4 16-4 1.500-4-2-7-2-5 0-8-3-8-7 0-3 1-5.500 2-7z"/><circle class="n" cx="7" cy="8" r="2" fill="#e8463a"/><circle class="n" cx="6" cy="14" r="2" fill="#45a844"/><circle class="n" cx="13" cy="5.500" r="2" fill="#f5c52b"/><path class="n" fill="#c9702c" d="M22 0l2 2-9 12-3-2z"/><path class="n" fill="#4a3b36" d="M12 12l3 2-3 5-4 1z"/>`), "run")}
      </div>
      <div class="tray">
        ${icon(23, 20, svg`<circle class="n" cx="8" cy="7" r="7" fill="#fdb827"/><path class="n" fill="#e9eef5" d="M8 19a4.500 4.500 0 01-.5-9 5.500 5.500 0 0110.500 1 4 4 0 011 8z"/>`)}
        ${fit("24°C", 30, "temp")}
        ${icon(11, 7, svg`<path stroke-width="1.300" d="M.5 6.500l5-5 5 5"/>`, "up")}
        ${icon(17, 11, svg`<path class="n" fill="#dfe3e4" d="M4 10.500a3.500 3.500 0 01-.3-7A5 5 0 0112.500 3a3.800 3.800 0 01.5 7.500z"/>`, "cloud")}
        ${icon(13, 13, svg`<g stroke-width="1.200"><path d="M1 12.500A11.500 11.500 0 0112.500 1M4.500 12.500a8 8 0 018-8M8 12.500A4.500 4.500 0 0112.500 8"/></g><circle class="f" cx="11.500" cy="11.500" r="1.500"/>`, "wifi")}
        ${icon(17, 12, svg`<path d="M2.500 2.500h12v7h-12zM15.500 4.500v3"/><rect class="f" x="4" y="4" width="5" height="4"/><path d="M1 8v4M-.500 8h3"/>`, "bat")}
        ${icon(16, 13, svg`<path d="M.5 4.500H3l3.500-3.500v11L3 8.500H.5zM9 4.500a3 3 0 010 4M11 2.500a6 6 0 010 8M13 .8a8.500 8.500 0 010 11.400"/>`, "spk")}
        ${fit("ENG", 23, "eng")}
        <div class="clock">${fit("06:01", 27)}${fit("01-09-2021", 58)}</div>
        <div class="note">${icon(16, 15, svg`<path class="f" d="M0 0h16v12h-5l-3 3v-3H0z"/><path stroke="#1a2a2f" d="M3 3.500h10M3 6h10M3 8.500h6"/>`)}<span class="nb">1</span></div>
      </div>`;
  }
}

@customElement("app-root")
class AppRoot extends LitElement {
  static styles = [iconCss, css`
    :host { display: flex; flex-direction: column; width: 1366px; height: 768px; overflow: hidden; position: relative; background: #fff; }
    .main { display: flex; height: 535px; }
    .fab { position: absolute; right: 17px; bottom: 57px; width: 46px; height: 46px; border-radius: 50%; background: #0f62fe; color: #fff; display: flex; align-items: center; justify-content: center; }
  `];
  render() {
    return html`
      <browser-bar></browser-bar>
      <cognos-header></cognos-header>
      <div class="main"><source-panel></source-panel><dash-canvas></dash-canvas></div>
      <task-bar></task-bar>
      <div class="fab">${icon(20, 18, svg`<path stroke-width="1.400" d="M8 14H2.500A1.500 1.500 0 011 12.500v-10A1.500 1.500 0 012.500 1h15A1.500 1.500 0 0119 2.500v10a1.500 1.500 0 01-1.500 1.500H13l-2 3.500M5 5h10M5 9h7"/>`)}</div>`;
  }
}
